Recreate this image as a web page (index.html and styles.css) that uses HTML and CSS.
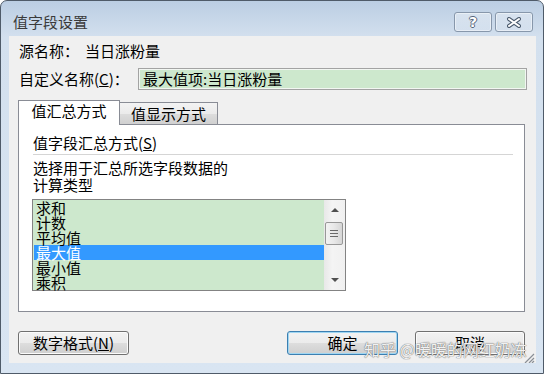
FILE: index.html
```html
<!DOCTYPE html>
<html lang="zh-CN">

<head>
    <meta charset="UTF-8">
    <title>值字段设置</title>
    <link rel="stylesheet" href="styles.css">
</head>

<body>
    <div class="window">
        <div class="titlebar">
            <span class="title">值字段设置</span>
            <div class="caption-btns">
                <div class="cap-btn"><span class="help-glyph">?</span></div>
                <div class="cap-btn">
                    <svg width="16" height="11" viewBox="0 0 16 11">
                        <path d="M3 2 L13 9 M13 2 L3 9" stroke="#4b5b6e" stroke-width="4" stroke-linecap="round" />
                        <path d="M3 2 L13 9 M13 2 L3 9" stroke="#ffffff" stroke-width="2" stroke-linecap="round" />
                    </svg>
                </div>
            </div>
        </div>

        <div class="client">
            <div class="source-row">源名称：<span class="source-name">当日涨粉量</span></div>

            <div class="custom-row">
                <label class="custom-label">自定义名称(<u>C</u>)：</label>
                <div class="textbox">最大值项:当日涨粉量</div>
            </div>

            <div class="tabs">
                <div class="tab active">值汇总方式</div>
                <div class="tab">值显示方式</div>
            </div>

            <div class="panel">
                <div class="group-title">值字段汇总方式(<u>S</u>)</div>
                <div class="sep"></div>
                <p class="hint">选择用于汇总所选字段数据的<br>计算类型</p>

                <div class="listbox">
                    <ul class="items">
                        <li>求和</li>
                        <li>计数</li>
                        <li>平均值</li>
                        <li class="selected">最大值</li>
                        <li>最小值</li>
                        <li>乘积</li>
                    </ul>
                    <div class="scrollbar">
                        <div class="arrow"><span class="tri up"></span></div>
                        <div class="thumb"><span></span><span></span><span></span></div>
                        <div class="track"></div>
                        <div class="arrow"><span class="tri down"></span></div>
                    </div>
                </div>
            </div>

            <div class="buttons">
                <button type="button" class="btn">数字格式(<u>N</u>)</button>
                <div class="btn-group">
                    <button type="button" class="btn default">确定</button>
                    <button type="button" class="btn">取消</button>
                </div>
            </div>

            <div class="watermark">知乎 @暖暖的网红奶冻</div>
            <svg class="grip" width="11" height="10" viewBox="0 0 11 10">
                <path d="M10 1 L1 10 M10 5 L5 10 M10 8 L8 10" stroke="#8a8f96" stroke-width="1.2" />
            </svg>
        </div>
    </div>
</body>

</html>
```

FILE: styles.css
```css
body {
    margin: 0;
    background-color: #ffffff;
    font-family: "Noto Sans CJK SC", "Liberation Sans", sans-serif;
    font-size: 15px;
    color: #000000;
}

.window {
    width: 544px;
    height: 374px;
    box-sizing: border-box;
    border: 1px solid #4f5b69;
    border-radius: 7px 7px 0 0;
    background: linear-gradient(#bbcee3, #d3e0ee 36px, #d9e5f2);
    display: flex;
    flex-direction: column;
    overflow: hidden;
}

.titlebar {
    height: 35px;
    box-sizing: border-box;
    display: flex;
    justify-content: space-between;
    align-items: flex-start;
    padding: 11px 10px 0 12px;
}

.title {
    line-height: 20px;
    color: #3a3a3a;
}

.caption-btns {
    display: flex;
    gap: 3px;
}

.cap-btn {
    width: 38px;
    height: 20px;
    box-sizing: border-box;
    border: 1px solid #8797ab;
    border-radius: 3px;
    background: linear-gradient(rgba(255, 255, 255, 0.35), rgba(255, 255, 255, 0.1));
    box-shadow: inset 0 0 0 1px rgba(255, 255, 255, 0.45);
    display: flex;
    align-items: center;
    justify-content: center;
}

.help-glyph {
    font-family: "DejaVu Sans", sans-serif;
    font-weight: bold;
    font-size: 14px;
    line-height: 14px;
    color: #ffffff;
    text-shadow: 1px 0 0 #55657a, -1px 0 0 #55657a, 0 1px 0 #55657a, 0 -1px 0 #55657a;
}

.client {
    flex: 1;
    margin: 0 7px 10px 8px;
    background-color: #f0f0f0;
    display: flex;
    flex-direction: column;
    position: relative;
}

.source-row {
    margin: 6px 0 0 10px;
    line-height: 18px;
    height: 18px;
}

.source-name {
    margin-left: 6px;
}

.custom-row {
    display: flex;
    align-items: center;
    height: 22px;
    margin: 8px 9px 0 10px;
}

.custom-label {
    width: 119px;
    line-height: 18px;
}

.textbox {
    flex: 1;
    height: 22px;
    box-sizing: border-box;
    border: 1px solid #a3a3a3;
    box-shadow: inset 0 0 0 1px #f2f6f2;
    background-color: #cde8cd;
    padding: 0 4px;
    line-height: 20px;
}

.tabs {
    display: flex;
    align-items: flex-end;
    height: 24px;
    margin: 10px 0 0 9px;
}

.tab {
    width: 98px;
    height: 22px;
    box-sizing: border-box;
    border: 1px solid #898c95;
    border-bottom: none;
    text-align: center;
    line-height: 21px;
    background: linear-gradient(#f3f3f3, #ebebeb 50%, #dddddd 51%, #d0d0d0);
}

.tab.active {
    width: 102px;
    height: 25px;
    margin-bottom: -1px;
    line-height: 20px;
    background: #ffffff;
    position: relative;
    z-index: 1;
}

.tab + .tab {
    border-left: none;
}

.panel {
    height: 188px;
    box-sizing: border-box;
    margin: 0 11px 0 9px;
    border: 1px solid #898c95;
    background-color: #ffffff;
    padding: 9px 11px 0 14px;
}

.group-title {
    line-height: 18px;
}

.sep {
    height: 1px;
    background-color: #d5d5d5;
    margin-top: 2px;
}

.hint {
    margin: 4px 0 0;
    line-height: 17px;
}

.listbox {
    display: flex;
    width: 314px;
    height: 92px;
    box-sizing: border-box;
    margin: 6px 0 0 -1px;
    border: 1px solid #838383;
}

.items {
    flex: 1;
    list-style: none;
    margin: 0;
    padding: 0 0 0 1px;
    background-color: #cde8cd;
}

.items li {
    height: 15px;
    line-height: 15px;
    padding-left: 2px;
}

.items li.selected {
    background-color: #3399ff;
    color: #ffffff;
}

.scrollbar {
    width: 21px;
    display: flex;
    flex-direction: column;
    background: linear-gradient(90deg, #e8e8e8, #f4f4f4 40%, #f0f0f0);
}

.arrow {
    height: 20px;
    display: flex;
    align-items: center;
    justify-content: center;
}

.tri {
    width: 0;
    height: 0;
    border-left: 4px solid transparent;
    border-right: 4px solid transparent;
}

.tri.up {
    border-bottom: 4px solid #505050;
}

.tri.down {
    border-top: 4px solid #505050;
}

.thumb {
    height: 23px;
    width: 18px;
    box-sizing: border-box;
    margin: 2px 0 0 1px;
    border: 1px solid #989898;
    border-radius: 2px;
    background: linear-gradient(90deg, #f3f3f3, #e8e8e8 50%, #d6d6d6);
    display: flex;
    flex-direction: column;
    justify-content: center;
    align-items: center;
    gap: 2px;
}

.thumb span {
    width: 8px;
    height: 1px;
    background-color: #6a6a6a;
}

.track {
    flex: 1;
}

.buttons {
    display: flex;
    justify-content: space-between;
    margin: 19px 11px 0 9px;
}

.btn-group {
    display: flex;
    gap: 17px;
}

.btn {
    width: 111px;
    height: 24px;
    box-sizing: border-box;
    padding: 0;
    border: 1px solid #707070;
    border-radius: 3px;
    background: linear-gradient(#f2f2f2, #ebebeb 50%, #dddddd 51%, #cfcfcf);
    box-shadow: inset 0 0 0 1px #fbfbfb;
    font: inherit;
    line-height: 20px;
    color: #000000;
}

.btn-group .btn:last-child {
    width: 110px;
}

.btn.default {
    border-color: #3c7fb1;
    box-shadow: inset 0 0 0 1px #9fd6f2;
}

.watermark {
    position: absolute;
    left: 355px;
    top: 302px;
    font-size: 16px;
    line-height: 22px;
    color: rgba(255, 255, 255, 0.92);
    text-shadow: 0 0 1px #6d6d6d, 0 0 1px #6d6d6d;
    white-space: nowrap;
}

.grip {
    position: absolute;
    right: 1px;
    bottom: 0;
}
```
